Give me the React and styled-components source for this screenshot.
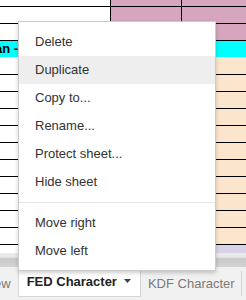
import styled, { createGlobalStyle } from "styled-components";

const GlobalStyle = createGlobalStyle`
  html, body {
    margin: 0;
    padding: 0;
    background: #ffffff;
  }
  body {
    font-family: "Liberation Sans", Arial, sans-serif;
    font-size: 13px;
  }
`;

const Page = styled.div`
  position: relative;
  width: 246px;
  height: 300px;
  overflow: hidden;
  display: flex;
  flex-direction: column;
  background: #f1f1f1;
`;

const Sheet = styled.div`
  display: flex;
  flex-direction: column;
  background: #ffffff;
`;

const Row = styled.div`
  display: flex;
  height: ${(p) => p.$h}px;
  box-sizing: border-box;
  border-bottom: ${(p) => (p.$line ? "1px solid #000" : "none")};
  background: ${(p) => p.$fill || "transparent"};
`;

const Cell = styled.div`
  box-sizing: border-box;
  width: ${(p) => (p.$w ? `${p.$w}px` : "auto")};
  flex: ${(p) => (p.$w ? "none" : "1")};
  background: ${(p) => p.$bg};
  border-right: ${(p) => (p.$edge ? "1px solid #000" : "none")};
`;

const BannerText = styled.span`
  font-weight: bold;
  color: #000;
  line-height: 16px;
  margin-left: -5px;
  white-space: nowrap;
`;

const ScrollStrip = styled.div`
  height: 14px;
  background: linear-gradient(#ececec 0%, #e6e6e6 30%, #c9c9c9 40%, #d4d4d4 100%);
`;

const TabBar = styled.div`
  display: flex;
  align-items: flex-start;
  height: 34px;
  background: #f1f1f1;
  white-space: nowrap;
`;

const Tab = styled.div`
  box-sizing: border-box;
  display: flex;
  align-items: center;
  margin-left: ${(p) => p.$shift || 0}px;
  padding: 0 ${(p) => p.$pr}px 0 ${(p) => p.$pl}px;
  height: 25px;
  margin-top: 4px;
  color: #7a7a7a;
  border-right: ${(p) => (p.$divider ? "1px solid #d3d3d3" : "none")};
`;

const ActiveTab = styled.div`
  box-sizing: border-box;
  display: flex;
  align-items: center;
  height: 30px;
  padding: 0 9px 0 8px;
  background: #ffffff;
  border: 1px solid #d6d6d6;
  border-top: none;
  color: #222;
  font-weight: bold;
`;

const Caret = styled.svg`
  margin-left: 7px;
  width: 7px;
  height: 4px;
`;

const Menu = styled.div`
  position: absolute;
  left: 18px;
  top: 21px;
  width: 198px;
  box-sizing: border-box;
  padding: 6px 0 5px;
  background: #ffffff;
  border: 1px solid rgba(0, 0, 0, 0.2);
  box-shadow: 0 2px 4px rgba(0, 0, 0, 0.2);
`;

const Item = styled.div`
  height: 28px;
  line-height: 28px;
  padding: 0 16px;
  color: #333;
  background: ${(p) => (p.$hover ? "#eeeeee" : "transparent")};
`;

const Separator = styled.div`
  margin: 6px 0;
  border-top: 1px solid #e5e5e5;
`;

const PINK = "#d5a6bd";
const PEACH = "#fce5cd";
const LAVENDER = "#d9d2e9";

const topRows = [7, 17, 17];
const lowerRows = [18, 17, 17, 17, 17, 17, 17, 17, 17, 17, 17];

function GridRow({ h, right, line = true }) {
  return (
    <Row $h={h} $line={line}>
      <Cell $w={111} $bg="#ffffff" $edge />
      <Cell $w={71} $bg={right} $edge />
      <Cell $bg={right} />
    </Row>
  );
}

export default function App() {
  return (
    <>
      <GlobalStyle />
      <Page>
        <Sheet>
          {topRows.map((h, i) => (
            <GridRow key={`t${i}`} h={h} right={PINK} />
          ))}
          <Row $h={16} $fill="#00ffff">
            <BannerText>an -</BannerText>
          </Row>
          {lowerRows.map((h, i) => (
            <GridRow key={`l${i}`} h={h} right={PEACH} />
          ))}
          <GridRow h={8} right={LAVENDER} line={false} />
        </Sheet>
        <ScrollStrip />
        <TabBar>
          <Tab $shift={-6} $pl={0} $pr={7}>
            ew
          </Tab>
          <ActiveTab>
            FED Character
            <Caret viewBox="0 0 7 4">
              <path d="M0 0 L7 0 L3.5 4 Z" fill="#3a3f4f" />
            </Caret>
          </ActiveTab>
          <Tab $pl={7} $pr={6} $divider>
            KDF Character
          </Tab>
        </TabBar>

        <Menu>
          <Item>Delete</Item>
          <Item $hover>Duplicate</Item>
          <Item>Copy to...</Item>
          <Item>Rename...</Item>
          <Item>Protect sheet...</Item>
          <Item>Hide sheet</Item>
          <Separator />
          <Item>Move right</Item>
          <Item>Move left</Item>
        </Menu>
      </Page>
    </>
  );
}
